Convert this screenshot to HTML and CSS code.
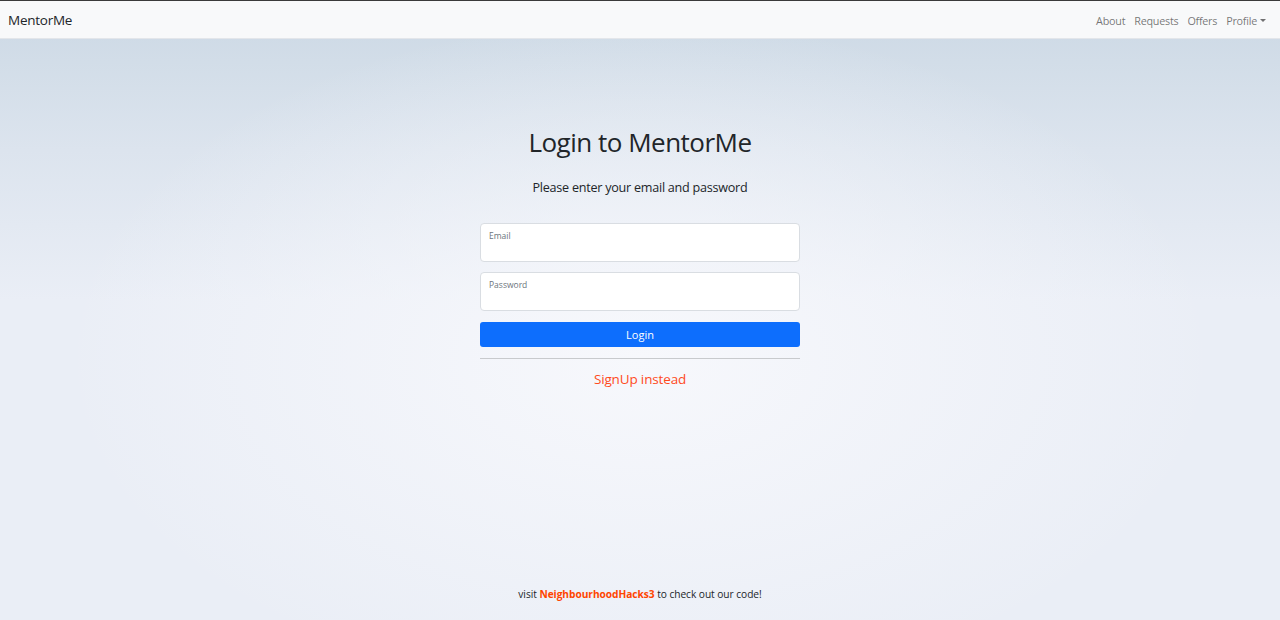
FILE: index.html
```html
<!DOCTYPE html>
<html lang="en">
<head>
<meta charset="utf-8">
<title>MentorMe</title>
<link rel="stylesheet" href="styles.css">
</head>
<body>
<div class="page">
  <nav class="navbar">
    <a class="brand" href="#">MentorMe</a>
    <ul class="nav">
      <li><a href="#">About</a></li>
      <li><a href="#">Requests</a></li>
      <li><a href="#">Offers</a></li>
      <li><a href="#" class="dropdown">Profile<span class="caret"></span></a></li>
    </ul>
  </nav>
  <main class="main">
    <h1 class="title">Login to MentorMe</h1>
    <p class="lead">Please enter your email and password</p>
    <form class="form">
      <label class="field">
        <span class="field-label">Email</span>
        <input type="email" class="field-input">
      </label>
      <label class="field">
        <span class="field-label">Password</span>
        <input type="password" class="field-input">
      </label>
      <button type="button" class="btn">Login</button>
      <hr class="rule">
      <a href="#" class="signup">SignUp instead</a>
    </form>
  </main>
  <footer class="footer">visit <a href="#" class="repo">NeighbourhoodHacks3</a> to check out our code!</footer>
</div>
</body>
</html>
```
FILE: styles.css
```css
* { box-sizing: border-box; }
html, body { margin: 0; padding: 0; height: 100%; }
body {
  font-family: "Open Sans", "Noto Sans", sans-serif;
  color: #212529;
  background:
    radial-gradient(ellipse 45% 55% at 50% 58%, rgba(247,248,252,1) 0%, rgba(247,248,252,0) 100%),
    linear-gradient(to bottom, #cbd8e4 0px, #dce4ee 150px, #eaeef6 300px, #eaeef6 100%);
}
.page {
  min-height: 620px;
  display: flex;
  flex-direction: column;
  border-top: 1px solid #3a3a3a;
}
.navbar {
  height: 38px;
  background: #f8f9fa;
  border-bottom: 1px solid #e3e6ea;
  display: flex;
  align-items: center;
  justify-content: space-between;
  padding: 0 8px;
}
.brand {
  font-size: 13.5px;
  letter-spacing: -0.25px;
  color: #212529;
  text-decoration: none;
  margin-top: 1px;
}
.nav {
  list-style: none;
  margin: 0 0 2px;
  padding: 0;
  display: flex;
  gap: 9px;
  padding-right: 6px;
}
.nav a {
  font-size: 10.8px;
  color: rgba(0,0,0,.55);
  text-decoration: none;
  letter-spacing: -0.25px;
}
.dropdown { display: inline-flex; align-items: center; }
.caret {
  display: inline-block;
  margin-left: 3px;
  border-top: 3px solid rgba(0,0,0,.55);
  border-left: 3px solid transparent;
  border-right: 3px solid transparent;
}
.main {
  flex: 1;
  display: flex;
  flex-direction: column;
  align-items: center;
  padding-top: 86px;
}
.title {
  margin: 0;
  font-weight: 400;
  font-size: 26px;
  letter-spacing: -0.5px;
  line-height: 34px;
}
.lead {
  margin: 20px 0 0;
  font-size: 12.6px;
  letter-spacing: -0.25px;
  line-height: 18px;
}
.form {
  width: 320px;
  margin-top: 26px;
  display: flex;
  flex-direction: column;
}
.field {
  position: relative;
  display: block;
  height: 39px;
  margin-bottom: 10px;
}
.field-label {
  position: absolute;
  left: 9px;
  top: 7px;
  font-size: 8.5px;
  color: #6c757d;
}
.field-input {
  width: 100%;
  height: 100%;
  border: 1px solid #d9dde2;
  border-radius: 4px;
  background: #fff;
  outline: none;
  font: inherit;
}
.btn {
  margin-top: 1px;
  height: 25px;
  border: none;
  border-radius: 3px;
  background: #0d6efd;
  color: #fff;
  font-family: inherit;
  font-size: 11px;
  cursor: pointer;
}
.rule {
  width: 100%;
  margin: 11px 0 0;
  border: 0;
  border-top: 1px solid #c8cacd;
}
.signup {
  margin-top: 11px;
  text-align: center;
  color: #ff4b1c;
  font-size: 13.5px;
  letter-spacing: -0.15px;
  text-decoration: none;
}
.footer {
  text-align: center;
  font-size: 10.2px;
  letter-spacing: -0.05px;
  padding-bottom: 19px;
  color: #212529;
}
.repo {
  color: #ff4500;
  font-weight: 700;
  text-decoration: none;
}
```
